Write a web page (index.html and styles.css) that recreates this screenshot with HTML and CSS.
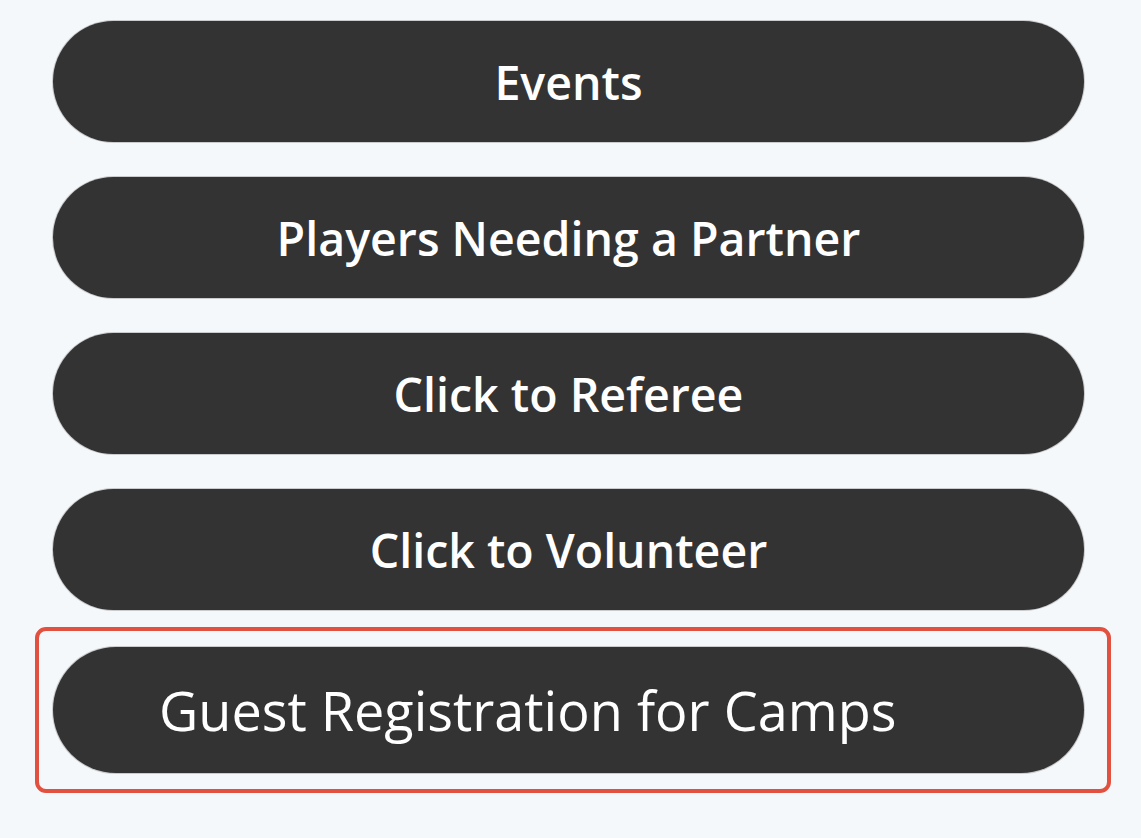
FILE: index.html
```html
<!DOCTYPE html>
<html>
<head>
<meta charset="utf-8">
<link rel="stylesheet" href="styles.css">
</head>
<body>
<div class="menu">
  <a class="btn">Events</a>
  <a class="btn">Players Needing a Partner</a>
  <a class="btn">Click to Referee</a>
  <a class="btn">Click to Volunteer</a>
  <div class="highlight">
    <a class="btn btn-guest">Guest Registration for Camps</a>
  </div>
</div>
</body>
</html>
```

FILE: styles.css
```css
html, body {
  margin: 0;
  padding: 0;
  background: #f5f8fa;
}
.menu {
  display: flex;
  flex-direction: column;
  gap: 35px;
  padding: 21px 0 0 53px;
  width: 1031px;
  font-family: "Open Sans", "Noto Sans", sans-serif;
}
.btn {
  display: flex;
  align-items: center;
  justify-content: center;
  height: 121px;
  box-sizing: border-box;
  border-radius: 61px;
  background: #333333;
  color: #ffffff;
  font-size: 46.5px;
  font-weight: 600;
  text-decoration: none;
  box-shadow: 0 0 0 1px rgba(120,120,120,0.35);
}
.highlight {
  margin: -18px 0 0 -18px;
  padding: 16px 23px 16px 14px;
  border: 4px solid #e2513f;
  border-radius: 11px;
  width: 1031px;
}
.btn-guest {
  height: 126px;
  border-radius: 63px;
  justify-content: flex-start;
  padding-left: 106px;
  font-size: 54px;
  font-weight: 400;
}
```
